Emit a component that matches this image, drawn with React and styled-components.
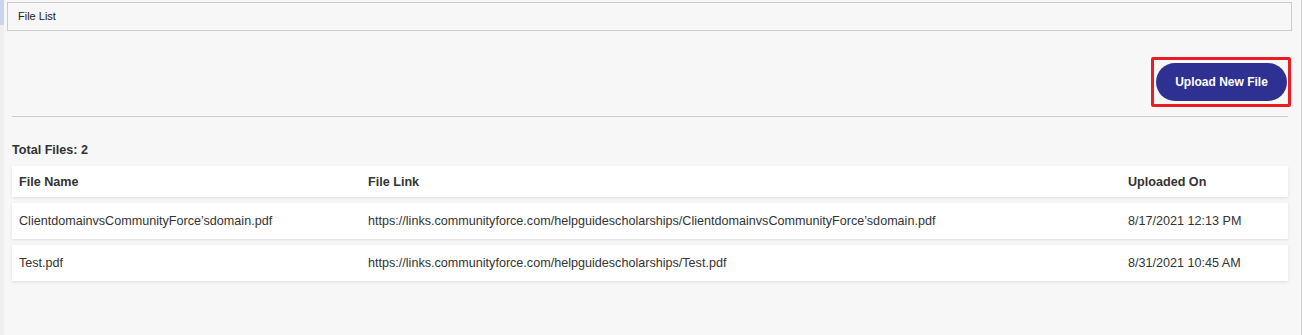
import React from 'react';
import styled, { createGlobalStyle } from 'styled-components';

const GlobalStyle = createGlobalStyle`
  body {
    margin: 0;
    background: #f7f7f7;
    font-family: "Liberation Sans", Arial, sans-serif;
    color: #333333;
  }
`;

const Page = styled.div`
  display: flex;
  min-height: 335px;
  border-right: 1px solid #cfcfcf;
`;

const Rail = styled.div`
  width: 4px;
  flex-shrink: 0;
  background: #efefef;

  &::before {
    content: '';
    display: block;
    height: 25px;
    background: #c9d5ea;
  }
`;

const Main = styled.main`
  flex: 1;
  min-width: 0;
  padding: 2px 9px 0 3px;
`;

const Breadcrumb = styled.div`
  height: 29px;
  box-sizing: border-box;
  border: 1px solid #cccccc;
  padding-left: 10px;
  font-size: 11px;
  line-height: 27px;
  color: #222222;
`;

const Content = styled.div`
  padding: 0 4px 0 5px;
`;

const Toolbar = styled.div`
  display: flex;
  justify-content: flex-end;
  margin: 26px -3px 0 0;
`;

const Highlight = styled.div`
  border: 3px solid #ec1c24;
  border-radius: 2px;
  padding: 3px 1px 3px 2px;
`;

const UploadButton = styled.button`
  height: 38px;
  width: 131px;
  border: none;
  border-radius: 19px;
  background: #2e3192;
  color: #ffffff;
  font-family: inherit;
  font-size: 12px;
  font-weight: 700;
  cursor: pointer;
`;

const Divider = styled.hr`
  margin: 9px 0 0;
  border: none;
  border-top: 1px solid #cccccc;
`;

const TotalFiles = styled.div`
  margin-top: 26px;
  font-size: 12.6px;
  font-weight: 700;
  line-height: 14px;
`;

const Table = styled.div`
  display: flex;
  flex-direction: column;
  gap: 7px;
  margin-top: 9px;
`;

const Row = styled.div`
  display: grid;
  grid-template-columns: 349px 760px 1fr;
  align-items: center;
  height: ${({ $header }) => ($header ? '31px' : '36px')};
  background: #ffffff;
  box-shadow: 0 1px 3px rgba(0, 0, 0, 0.1);
  font-size: 12.6px;
  font-weight: ${({ $header }) => ($header ? 700 : 400)};
  color: #333333;

  & + & {
    margin-top: ${({ $header }) => ($header ? '0' : '-1px')};
  }
`;

const Cell = styled.div`
  padding-left: 7px;
  white-space: nowrap;
`;

const files = [
  {
    name: 'ClientdomainvsCommunityForce’sdomain.pdf',
    link: 'https://links.communityforce.com/helpguidescholarships/ClientdomainvsCommunityForce’sdomain.pdf',
    uploaded: '8/17/2021 12:13 PM',
  },
  {
    name: 'Test.pdf',
    link: 'https://links.communityforce.com/helpguidescholarships/Test.pdf',
    uploaded: '8/31/2021 10:45 AM',
  },
];

export default function App() {
  return (
    <>
      <GlobalStyle />
      <Page>
        <Rail />
        <Main>
          <Breadcrumb>File List</Breadcrumb>
          <Content>
            <Toolbar>
              <Highlight>
                <UploadButton>Upload New File</UploadButton>
              </Highlight>
            </Toolbar>
            <Divider />
            <TotalFiles>Total Files: {files.length}</TotalFiles>
            <Table>
              <Row $header>
                <Cell>File Name</Cell>
                <Cell>File Link</Cell>
                <Cell>Uploaded On</Cell>
              </Row>
              {files.map((file) => (
                <Row key={file.name}>
                  <Cell>{file.name}</Cell>
                  <Cell>{file.link}</Cell>
                  <Cell>{file.uploaded}</Cell>
                </Row>
              ))}
            </Table>
          </Content>
        </Main>
      </Page>
    </>
  );
}
